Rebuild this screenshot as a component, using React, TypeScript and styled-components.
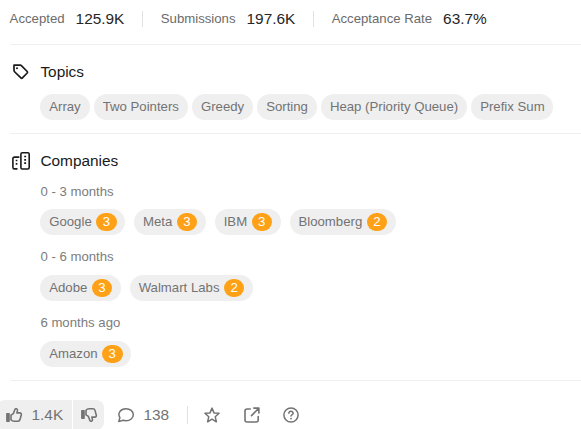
import React from "react";
import styled, { createGlobalStyle } from "styled-components";

const GlobalStyle = createGlobalStyle`
  * { box-sizing: border-box; }
  html, body { margin: 0; background: #fff; overflow: hidden; }
  body { font-family: "Liberation Sans", Arial, sans-serif; }
`;

const Page = styled.main`
  display: flex;
  flex-direction: column;
  width: 581px;
  height: 429px;
  overflow: hidden;
  background: #fff;
`;

const Stats = styled.section`
  flex: none;
  display: flex;
  align-items: center;
  height: 38px;
  margin: 0 0 6px 9.6px;
`;

const Stat = styled.div`
  display: flex;
  align-items: center;
  gap: 11px;
  white-space: nowrap;
`;

const StatLabel = styled.span`
  font-size: 13.2px;
  line-height: 17.6px;
  color: #6b6b6b;
`;

const StatValue = styled.span`
  font-size: 15.4px;
  line-height: 22px;
  color: #262626;
`;

const VerticalRule = styled.span<{ $gap: number; $height: number }>`
  flex: none;
  width: 1px;
  height: ${(p) => p.$height}px;
  margin: 0 ${(p) => p.$gap}px;
  background: #e2e2e2;
`;

const Divider = styled.hr`
  flex: none;
  width: 571px;
  height: 1px;
  margin: 0 0 0 10px;
  border: 0;
  background: #efefef;
`;

const Section = styled.section<{ $height: number }>`
  flex: none;
  height: ${(p) => p.$height}px;
  padding: 16px 0 0 11px;
`;

const SectionTitle = styled.h2`
  display: flex;
  align-items: center;
  gap: 9.4px;
  height: 22px;
  margin: 0;
  font-size: 15.4px;
  font-weight: 400;
  line-height: 22px;
  color: #1a1a1a;
  svg { flex: none; }
`;

const Pills = styled.div<{ $gap: number }>`
  display: flex;
  gap: ${(p) => p.$gap}px;
  margin-left: 29.4px;
`;

const TopicPills = styled(Pills)`
  margin-top: 11px;
`;

const Pill = styled.span`
  display: flex;
  align-items: center;
  gap: 4.4px;
  height: 26px;
  padding: 0 8.8px;
  border-radius: 13px;
  background: #efefef;
  color: #737373;
  font-size: 13.2px;
  line-height: 17.6px;
  white-space: nowrap;
`;

const Count = styled.span`
  height: 18px;
  padding: 0 6.6px;
  border-radius: 9px;
  background: #ffa116;
  color: #fff;
  line-height: 18px;
`;

const Period = styled.h3`
  height: 18px;
  margin: 0 0 8px 29.4px;
  font-size: 13.2px;
  font-weight: 400;
  line-height: 18px;
  color: #7c7c7c;
`;

const Group = styled.div`
  margin-top: 11px;
  & + & { margin-top: 13px; }
  & + & ${Period} { margin-bottom: 9px; }
`;

const ActionBar = styled.footer`
  flex: none;
  display: flex;
  align-items: center;
  height: 30px;
  margin: 19px 0 0 -3px;
  color: #757575;
`;

const VoteGroup = styled.div`
  display: flex;
  gap: 1px;
  height: 30px;
  border-radius: 8px;
  overflow: hidden;
`;

const Action = styled.button<{ $width: number; $filled?: boolean; $pad?: number }>`
  flex: none;
  display: flex;
  align-items: center;
  gap: 8.5px;
  width: ${(p) => p.$width}px;
  height: 30px;
  padding: 0 0 0 ${(p) => p.$pad ?? 0}px;
  border: 0;
  background: ${(p) => (p.$filled ? "#efefef" : "transparent")};
  color: #737373;
  font: 15.4px/22px "Liberation Sans", Arial, sans-serif;
  svg { flex: none; }
`;

const line = {
  fill: "none",
  stroke: "currentColor",
  strokeLinecap: "round" as const,
  strokeLinejoin: "round" as const,
};

const TagIcon = () => (
  <svg width="20" height="20" viewBox="0 0 20 20" {...line} strokeWidth="1.7">
    <path d="M3 3.2h6.2c.5 0 .9.2 1.2.5l5.8 5.8c.5.5.5 1 0 1.5l-4.8 4.9c-.5.5-1 .5-1.5 0L3.8 10c-.5-.5-.8-1.2-.8-2z" />
    <circle cx="6" cy="6.2" r="1" fill="currentColor" stroke="none" />
  </svg>
);

const BuildingIcon = () => (
  <svg width="20" height="20" viewBox="0 0 20 20" {...line} strokeWidth="1.6">
    <path d="M7.8 6.1H3.6c-1 0-1.7.7-1.7 1.7v8.4c0 1 .6 1.7 1.5 1.7h2.5" />
    <rect x="9.9" y="1.8" width="8.3" height="16.2" rx="1.4" />
    <path
      d="M4.7 9.5h1.7M4.7 12.8h1.7M13.2 5.5h1.9M13.2 8.8h1.9M13.2 12.1h1.9"
      strokeLinecap="butt"
      strokeWidth="1.7"
    />
  </svg>
);

const ThumbIcon = ({ down = false }: { down?: boolean }) => (
  <svg width="18" height="18" viewBox="0 0 18 18" {...line} strokeWidth="1.6">
    <rect
      x="1.1"
      y={down ? 4 : 7}
      width="3.7"
      height="9"
      rx=".7"
      fill="currentColor"
      stroke="none"
    />
    <g transform={down ? "translate(0 18) scale(1 -1)" : undefined}>
      <path d="M6 9.1l2.4-1.5 1.5-4.1c.5-1.4 2.8-.8 2.6.9l-.6 2.5h2.9c1.2 0 1.8.8 1.5 1.9l-1.3 4.8c-.3 1-1 1.6-2 1.6H9.2c-1.6 0-2.5-.6-3.2-1.5z" />
    </g>
  </svg>
);

const CommentIcon = () => (
  <svg width="18" height="18" viewBox="0 0 18 18" {...line} strokeWidth="1.5">
    <path d="M2.9 11.7C.2 7.5 3.4 2.7 9 2.7c4.2 0 7.3 2.6 7.3 6s-3.1 6-7.3 6c-1 0-1.9-.1-2.8-.4l-4.4 1.1z" />
  </svg>
);

const StarIcon = () => (
  <svg width="18" height="18" viewBox="0 0 18 18" {...line} strokeWidth="1.5">
    <path d="M9 2.1l2 4.8 5.1.4-3.9 3.4 1.2 5.1L9 13.1l-4.4 2.7 1.2-5.1-3.9-3.4 5.1-.4z" />
  </svg>
);

const ShareIcon = () => (
  <svg width="18" height="18" viewBox="0 0 18 18" {...line} strokeWidth="1.6">
    <path d="M7.3 3H4a2 2 0 0 0-2 2v9a2 2 0 0 0 2 2h9.2a2 2 0 0 0 2-2v-3.4M10.8 2.1h5.1v5M15.5 2.5l-7 7.1" />
  </svg>
);

const HelpIcon = () => (
  <svg width="18" height="18" viewBox="0 0 18 18" {...line} strokeWidth="1.5">
    <circle cx="9" cy="9" r="7.1" />
    <path d="M6.9 7.2c.1-2.7 4.3-2.4 4.2 0 0 1.5-1.9 1.5-2.1 2.8" />
    <circle cx="9" cy="12.6" r=".9" fill="currentColor" stroke="none" />
  </svg>
);

const stats = [
  ["Accepted", "125.9K"],
  ["Submissions", "197.6K"],
  ["Acceptance Rate", "63.7%"],
];

const topics = ["Array", "Two Pointers", "Greedy", "Sorting", "Heap (Priority Queue)", "Prefix Sum"];

const companies: { period: string; items: [string, number][] }[] = [
  { period: "0 - 3 months", items: [["Google", 3], ["Meta", 3], ["IBM", 3], ["Bloomberg", 2]] },
  { period: "0 - 6 months", items: [["Adobe", 3], ["Walmart Labs", 2]] },
  { period: "6 months ago", items: [["Amazon", 3]] },
];

export default function App() {
  return (
    <>
      <GlobalStyle />
      <Page>
        <Stats>
          {stats.map(([label, value], i) => (
            <React.Fragment key={label}>
              {i > 0 && <VerticalRule $gap={17.7} $height={16} />}
              <Stat>
                <StatLabel>{label}</StatLabel>
                <StatValue>{value}</StatValue>
              </Stat>
            </React.Fragment>
          ))}
        </Stats>
        <Divider />
        <Section $height={88}>
          <SectionTitle><TagIcon />Topics</SectionTitle>
          <TopicPills $gap={4.4}>
            {topics.map((t) => <Pill key={t}>{t}</Pill>)}
          </TopicPills>
        </Section>
        <Divider />
        <Section $height={246}>
          <SectionTitle><BuildingIcon />Companies</SectionTitle>
          {companies.map((g) => (
            <Group key={g.period}>
              <Period>{g.period}</Period>
              <Pills $gap={8.8}>
                {g.items.map(([name, n]) => (
                  <Pill key={name}>{name}<Count>{n}</Count></Pill>
                ))}
              </Pills>
            </Group>
          ))}
        </Section>
        <Divider />
        <ActionBar>
          <VoteGroup>
            <Action $width={75} $pad={8} $filled><ThumbIcon />1.4K</Action>
            <Action $width={31} $pad={7} $filled aria-label="Dislike"><ThumbIcon down /></Action>
          </VoteGroup>
          <Action $width={83} $pad={13}><CommentIcon />138</Action>
          <VerticalRule $gap={0} $height={18} />
          <Action $width={40} $pad={15} aria-label="Favorite"><StarIcon /></Action>
          <Action $width={40} $pad={15} aria-label="Share"><ShareIcon /></Action>
          <Action $width={40} $pad={14} aria-label="Help"><HelpIcon /></Action>
        </ActionBar>
      </Page>
    </>
  );
}
